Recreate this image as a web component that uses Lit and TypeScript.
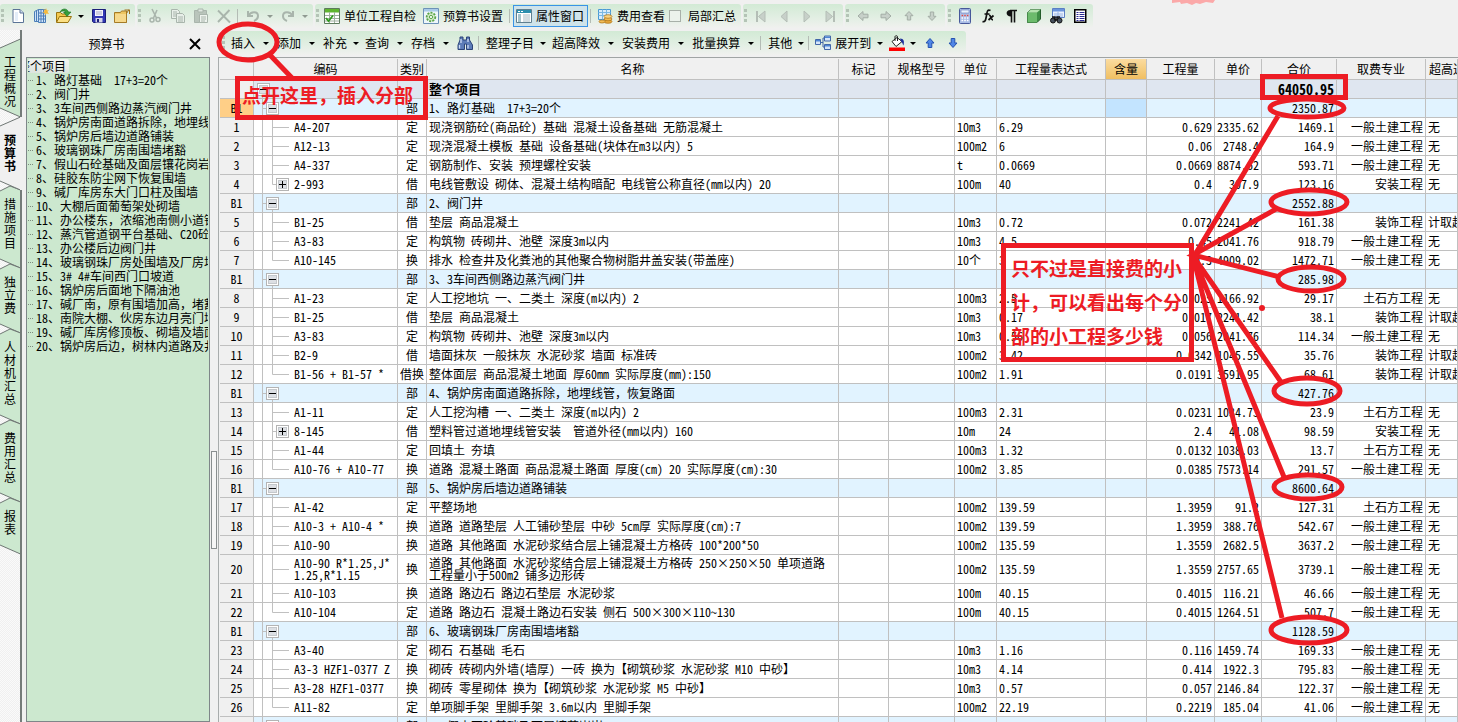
import { LitElement, html, svg, css, nothing } from "lit";
import { customElement } from "lit/decorators.js";
import { classMap } from "lit/directives/class-map.js";

type Row = {
  kind: "root" | "part" | "item";
  no?: string; code?: string; type?: string; name: string;
  unit?: string; expr?: string; qty?: string; price?: string; total?: string;
  trade?: string; extra?: string; plus?: boolean; last?: boolean; tall?: boolean; current?: boolean;
};

const T = "一般土建工程", Z = "装饰工程", A = "安装工程", S = "土石方工程", W = "无", J = "计取超高";
const part = (name: string, total: string, current = false): Row => ({ kind: "part", no: "B1", type: "部", name, total, current });
const item = (no: string, code: string, type: string, name: string, unit: string, expr: string, qty: string,
  price: string, total: string, trade: string, extra: string, opts: Partial<Row> = {}): Row =>
  ({ kind: "item", no, code, type, name, unit, expr, qty, price, total, trade, extra, ...opts });

const ROWS: Row[] = [
  { kind: "root", name: "整个项目", total: "64050.95" },
  part("1、路灯基础  17+3=20个", "2350.87", true),
  item("1", "A4-207", "定", "现浇钢筋砼(商品砼) 基础 混凝土设备基础 无筋混凝土", "10m3", "6.29", "0.629", "2335.62", "1469.1", T, W),
  item("2", "A12-13", "定", "现浇混凝土模板 基础 设备基础(块体在m3以内) 5", "100m2", "6", "0.06", "2748.4", "164.9", T, W),
  item("3", "A4-337", "定", "钢筋制作、安装 预埋螺栓安装", "t", "0.0669", "0.0669", "8874.62", "593.71", T, W),
  item("4", "2-993", "借", "电线管敷设 砌体、混凝土结构暗配 电线管公称直径(mm以内) 20", "100m", "40", "0.4", "307.9", "123.16", A, W, { plus: true, last: true }),
  part("2、阀门井", "2552.88"),
  item("5", "B1-25", "借", "垫层 商品混凝土", "10m3", "0.72", "0.072", "2241.42", "161.38", Z, J),
  item("6", "A3-83", "定", "构筑物 砖砌井、池壁 深度3m以内", "10m3", "4.5", "0.45", "2041.76", "918.79", T, W),
  item("7", "A10-145", "换", "排水 检查井及化粪池的其他聚合物树脂井盖安装(带盖座)", "10个", "3", "0.3", "4909.02", "1472.71", T, W, { last: true }),
  part("3、3车间西侧路边蒸汽阀门井", "285.98"),
  item("8", "A1-23", "定", "人工挖地坑 一、二类土 深度(m以内) 2", "100m3", "2.5", "0.025", "1166.92", "29.17", S, W),
  item("9", "B1-25", "借", "垫层 商品混凝土", "10m3", "0.17", "0.017", "2241.42", "38.1", Z, J),
  item("10", "A3-83", "定", "构筑物 砖砌井、池壁 深度3m以内", "10m3", "0.56", "0.056", "2041.76", "114.34", T, W),
  item("11", "B2-9", "借", "墙面抹灰 一般抹灰 水泥砂浆 墙面 标准砖", "100m2", "3.42", "0.0342", "1045.55", "35.76", Z, J),
  item("12", "B1-56 + B1-57 *", "借换", "整体面层 商品混凝土地面 厚60mm 实际厚度(mm):150", "100m2", "1.91", "0.0191", "3591.95", "68.61", Z, J, { last: true }),
  part("4、锅炉房南面道路拆除，地埋线管，恢复路面", "427.76"),
  item("13", "A1-11", "定", "人工挖沟槽 一、二类土 深度(m以内) 2", "100m3", "2.31", "0.0231", "1034.73", "23.9", S, W),
  item("14", "8-145", "借", "塑料管过道地埋线管安装  管道外径(mm以内) 160", "10m", "24", "2.4", "41.08", "98.59", A, W, { plus: true }),
  item("15", "A1-44", "定", "回填土 夯填", "100m3", "1.32", "0.0132", "1038.03", "13.7", S, W),
  item("16", "A10-76 + A10-77", "换", "道路 混凝土路面 商品混凝土路面 厚度(cm) 20 实际厚度(cm):30", "100m2", "3.85", "0.0385", "7573.14", "291.57", T, W, { last: true }),
  part("5、锅炉房后墙边道路铺装", "8600.64"),
  item("17", "A1-42", "定", "平整场地", "100m2", "139.59", "1.3959", "91.2", "127.31", S, W),
  item("18", "A10-3 + A10-4 *", "换", "道路 道路垫层 人工铺砂垫层 中砂 5cm厚 实际厚度(cm):7", "100m2", "139.59", "1.3959", "388.76", "542.67", T, W),
  item("19", "A10-90", "换", "道路 其他路面 水泥砂浆结合层上铺混凝土方格砖 100*200*50", "100m2", "135.59", "1.3559", "2682.5", "3637.2", T, W),
  item("20", "A10-90 R*1.25,J*\n1.25,R*1.15", "换", "道路 其他路面 水泥砂浆结合层上铺混凝土方格砖 250×250×50 单项道路\n工程量小于500m2 铺多边形砖", "100m2", "135.59", "1.3559", "2757.65", "3739.1", T, W, { tall: true }),
  item("21", "A10-103", "换", "道路 路边石 路边石垫层 水泥砂浆", "100m", "40.15", "0.4015", "116.21", "46.66", T, W),
  item("22", "A10-104", "定", "道路 路边石 混凝土路边石安装 侧石 500×300×110~130", "100m", "40.15", "0.4015", "1264.51", "507.7", T, W, { last: true }),
  part("6、玻璃钢珠厂房南围墙堵豁", "1128.59"),
  item("23", "A3-40", "定", "砌石 石基础 毛石", "10m3", "1.16", "0.116", "1459.74", "169.33", T, W),
  item("24", "A3-3 HZF1-0377 Z", "换", "砌砖 砖砌内外墙(墙厚) 一砖 换为【砌筑砂浆 水泥砂浆 M10 中砂】", "10m3", "4.14", "0.414", "1922.3", "795.83", T, W),
  item("25", "A3-28 HZF1-0377", "换", "砌砖 零星砌体 换为【砌筑砂浆 水泥砂浆 M5 中砂】", "10m3", "0.57", "0.057", "2146.84", "122.37", T, W),
  item("26", "A11-82", "定", "单项脚手架 里脚手架 3.6m以内 里脚手架", "100m2", "22.19", "0.2219", "185.04", "41.06", T, W, { last: true }),
  part("7、假山石砼基础及面层镶花岗岩", ""),
];

const HEADS = ["", "编码", "类别", "名称", "标记", "规格型号", "单位", "工程量表达式", "含量", "工程量", "单价", "合价", "取费专业", "超高过高"];

const TREE = [
  "1、路灯基础  17+3=20个", "2、阀门井", "3、3车间西侧路边蒸汽阀门井", "4、锅炉房南面道路拆除，地埋线管",
  "5、锅炉房后墙边道路铺装", "6、玻璃钢珠厂房南围墙堵豁", "7、假山石砼基础及面层镶花岗岩", "8、硅胶东防尘网下恢复围墙",
  "9、碱厂库房东大门口柱及围墙", "10、大棚后面葡萄架处砌墙", "11、办公楼东，浓缩池南侧小道铺装",
  "12、蒸汽管道钢平台基础、C20砼", "13、办公楼后边阀门井", "14、玻璃钢珠厂房处围墙及厂房地面",
  "15、3# 4#车间西门口坡道", "16、锅炉房后面地下隔油池", "17、碱厂南，原有围墙加高，堵豁",
  "18、南院大棚、伙房东边月亮门墙", "19、碱厂库房修顶板、砌墙及墙面", "20、锅炉房后边，树林内道路及井",
];

const TABS = [
  { text: "工程概况", h: 78 }, { text: "预算书", h: 73, on: true }, { text: "措施项目", h: 78 },
  { text: "独立费", h: 65 }, { text: "人材机汇总", h: 91 }, { text: "费用汇总", h: 78 }, { text: "报表", h: 52 },
];

// Half-width forms are on for Latin text; the Chinese comma keeps its full width.
const wide = (s: string) => s.split(/(，)/).map((p) => (p === "，" ? html`<span class="full">，</span>` : p));

const G = "#a9b5ac";
const ICONS: Record<string, unknown> = {
  doc: svg`<path d="M3 1.500h7l3.500 3.500v9.500H3z" fill="#fff" stroke="#5a7396"/><path d="M10 1.500v3.500h3.500" fill="#cfdcee" stroke="#5a7396"/><path d="M5 4h3v9H5z" fill="#e4edf8"/>`,
  building: svg`<path d="M1.500 3.500l4-2v12h-4zM5.500 1.500h7v13h-7z" fill="#cfe3f8" stroke="#4c7fb8"/><path d="M8 2v12M10.500 2v12M3.500 3v11M5.500 5h7M5.500 8h7M5.500 11h7" stroke="#4c7fb8"/><path d="M13 0l1 2.500 2-.5-1.500 1.800L16 6l-2.500-.5L12 7.500 11.700 5 9.500 4.500l2-1.200L10.500 1l2 1z" fill="#f5b93a"/>`,
  open: svg`<path d="M.5 14V4.500h4l1.500 1.500h5v3" fill="#f3c94f" stroke="#9a7410"/><path d="M.5 14.500l3-6h12l-3.500 6z" fill="#fbe084" stroke="#9a7410"/><path d="M4 4C6 0 11 0 12.500 4h2.500l-4 4.500L7.500 4h2.300C9 2.500 6.500 2.500 4 4z" fill="#35a03c" stroke="#1d6f25" stroke-width=".6"/>`,
  save: svg`<path d="M1.500 1.500h13v13h-12l-1-1z" fill="#3338b4" stroke="#1b1e78"/><path d="M4 2h8v6H4z" fill="#f4f4fb"/><path d="M5 4h6M5 6h6" stroke="#a9a9c8"/><path d="M4.500 10h7v4.500h-7z" fill="#d6d6ea"/><path d="M6 11h2v3H6z" fill="#1b1e78"/>`,
  folder: svg`<path d="M.5 4.500h6l1-1.500h5v11.500H.5z" fill="#edc662" stroke="#a57b26"/><path d="M1 6h11v8H1z" fill="#f6d98b"/><path d="M12.500 5.500l2.500-4M10.500 2h5v4" fill="none" stroke="#a0721c"/><path d="M12.500 5v9.500" stroke="#a57b26"/>`,
  cut: svg`<path d="M5 1l4.500 9M10 2L6.500 10" stroke="${G}" stroke-width="1.600"/><circle cx="5" cy="12" r="2" fill="none" stroke="${G}" stroke-width="1.500"/><circle cx="11" cy="11.500" r="2" fill="none" stroke="${G}" stroke-width="1.500"/>`,
  copy: svg`<path d="M1.500 1.500h6l2 2v7h-8z" fill="#e8efe9" stroke="${G}"/><path d="M6.500 5.500h6l2 2v7h-8z" fill="#e8efe9" stroke="${G}"/><path d="M8 9h5M8 11h5M8 13h5M3 4h4M3 6h3M3 8h3" stroke="${G}"/>`,
  paste: svg`<path d="M1.500 2.500h12v12h-12z" fill="#b9c4bb" stroke="${G}"/><path d="M5 1h5v3H5z" fill="#dfe7e0" stroke="${G}"/><path d="M6.500 6.500h8v8h-8z" fill="#eef3ee" stroke="${G}"/><path d="M8 9h5M8 11h5M8 13h4" stroke="${G}"/>`,
  del: svg`<path d="M2 2.500l12 12M13.500 2L2 14" stroke="${G}" stroke-width="1.900"/>`,
  undo: svg`<path d="M3 3v5h5M3.500 7.500C6 3 13 3 13 8c0 2-1.500 4-4 5" fill="none" stroke="${G}" stroke-width="2"/>`,
  redo: svg`<path d="M13 3v5H8M12.500 7.500C10 3 3 3 3 8c0 2 1.500 4 4 5" fill="none" stroke="${G}" stroke-width="2"/>`,
  check: svg`<path d="M.5.500h15v15H.5z" fill="#fff" stroke="#5d7a5d"/><path d="M1 1h14v3.500H1z" fill="#5fb530"/><path d="M1 7.500h14M1 10.500h14M1 13h14M5.500 4v11M10.500 4v11" stroke="#9fb09f"/><path d="M2 10l2.500 3L9 7.500" fill="none" stroke="#2f9a1d" stroke-width="1.800"/>`,
  gear: svg`<path d="M.5.500h15v15H.5z" fill="#eef6fb" stroke="#6d92b8"/><path d="M1 1h14v2.500H1z" fill="#a9cbe8"/><circle cx="8" cy="9" r="4.300" fill="#cfe8c4" stroke="#5aa448" stroke-width="1.800" stroke-dasharray="2 1.200"/><circle cx="8" cy="9" r="1.600" fill="#fff" stroke="#5aa448"/>`,
  panel: svg`<path d="M.5 1.500h15v13H.5z" fill="#fff" stroke="#5f7f90"/><path d="M1 2h14v3H1z" fill="#2c8fae"/><path d="M2 3.500h2M5 3.500h2" stroke="#fff"/><path d="M2 7h3M2 9h3M2 11h3M2 13h3" stroke="#4d8a9a"/><path d="M7 7h7M7 9h7M7 11h7M7 13h7" stroke="#a8bcc4"/>`,
  fee: svg`<path d="M1.500 1.500h12v10h-12z" fill="#d8ecfa" stroke="#4a9ad4"/><path d="M1.500 4.500h12M1.500 7.500h12M5.500 1.500v10M9.500 1.500v10" stroke="#7ab8e4"/><ellipse cx="11" cy="13.500" rx="4" ry="1.800" fill="#e9a93c" stroke="#a86e14" stroke-width=".7"/><ellipse cx="11" cy="11" rx="4" ry="1.800" fill="#f2bd57" stroke="#a86e14" stroke-width=".7"/><ellipse cx="11" cy="8.500" rx="4" ry="1.800" fill="#f8d483" stroke="#a86e14" stroke-width=".7"/><ellipse cx="5" cy="13.500" rx="3" ry="1.500" fill="#f2bd57" stroke="#a86e14" stroke-width=".7"/>`,
  first: svg`<path d="M4 3v11" stroke="#b4beb6" stroke-width="2"/><path d="M12 3v11L5.500 8.500z" fill="#c7d0c9" stroke="#b4beb6"/>`,
  prev: svg`<path d="M11 3v11L5 8.500z" fill="#c7d0c9" stroke="#b4beb6"/>`,
  next: svg`<path d="M5 3v11l6-5.500z" fill="#c7d0c9" stroke="#b4beb6"/>`,
  last: svg`<path d="M12 3v11" stroke="#b4beb6" stroke-width="2"/><path d="M4 3v11l6.500-5.500z" fill="#c7d0c9" stroke="#b4beb6"/>`,
  aleft: svg`<path d="M3 8l5-4.500v2.700h5v3.600H8v2.700z" fill="#c7d0c9" stroke="#a3ada5"/>`,
  aright: svg`<path d="M13 8L8 3.500v2.700H3v3.600h5v2.700z" fill="#c7d0c9" stroke="#a3ada5"/>`,
  aup: svg`<path d="M8 3.500l4 4.200H9.700V12H6.300V7.700H4z" fill="#c7d0c9" stroke="#a3ada5"/>`,
  adown: svg`<path d="M8 12.500l4-4.200H9.700V4H6.300v4.300H4z" fill="#c7d0c9" stroke="#a3ada5"/>`,
  calc: svg`<rect x="2.500" y=".5" width="11" height="15" rx="1" fill="#a9bde6" stroke="#47589a"/><path d="M4 2h8v3H4z" fill="#e8f2fc" stroke="#6a7cba" stroke-width=".6"/><path d="M4.500 7.500h7M4.500 10h7M4.500 12.500h7" stroke="#fff" stroke-width="1.600" stroke-dasharray="1.600 1.100"/><path d="M4.500 7.500h7" stroke="#d24848" stroke-width="1.600" stroke-dasharray="1.600 1.100"/>`,
  fx: svg`<path d="M10.500 2.500C7 .5 7 5 6.200 9 5.700 12 5 14.500 2.500 13.500M4.500 6h5M9 7.500c2-1 1.500 4.500 4 4.500M13.500 7.500L8.500 12" fill="none" stroke="#111" stroke-width="1.700"/>`,
  para: svg`<path d="M7 2.500h7M8.500 2.500v12M11.500 2.500v12" stroke="#111" stroke-width="1.600"/><path d="M8.500 2C2 1 2 9 8.500 8.500z" fill="#111"/>`,
  cube: svg`<path d="M1.500 4.500l3.500-3h9.500v9.500l-3.500 3.500h-9.500z" fill="#3f8f46" stroke="#235c2a"/><path d="M1.500 4.500h9.500v10h-9.500z" fill="#6cbb6c"/><path d="M1.500 4.500l3.500-3h9.500l-3.500 3z" fill="#b5e3b0"/>`,
  find: svg`<path d="M3.500.500h12v9h-12z" fill="#eaf2fd" stroke="#5a7fc4"/><path d="M4 1h11v2.500H4z" fill="#6a95dc"/><path d="M5 6h9M5 8h9M9 3.500v6" stroke="#9ab6e4"/><circle cx="4" cy="12.500" r="2.500" fill="#45505c" stroke="#111"/><circle cx="10.500" cy="12.500" r="2.500" fill="#45505c" stroke="#111"/><path d="M3 9h3v3h2V9h3" fill="none" stroke="#111" stroke-width="1.500"/>`,
  list: svg`<path d="M2.750 1.750h11v12.500h-11z" fill="#fff" stroke="#000" stroke-width="1.500"/><path d="M4.500 4.500h2M4.500 6.500h2M4.500 8.500h2M4.500 10.500h2M4.500 12.500h2M7.500 4.500h5M7.500 6.500h5M7.500 8.500h5M7.500 10.500h5M7.500 12.500h5" stroke="#2a2a90"/>`,
  bino: svg`<path d="M3 2h3v3h3.500V2h3v3l3 5v4.500H9.500V9h-2v5.500H1V10l2-5z" fill="#5d7cb8" stroke="#2d4478"/><path d="M2.500 10v3.500M4 4v4M11 10v3.500M11 4v3" stroke="#cfdcf4" stroke-width="1.300"/>`,
  nodes: svg`<path d="M5 7.500h3M8 3v9M8 3h2M8 12h2" fill="none" stroke="#4267a8"/><path d="M.5 4.500h5v5h-5zM9.500 1h6v5h-6zM9.500 9.500h6v5h-6z" fill="#d6e6fa" stroke="#4267a8"/><path d="M1 5h4v1.500H1zM10 1.500h5V3h-5zM10 10h5v1.500h-5z" fill="#4f86d4"/>`,
  paint: svg`<path d="M3 6.500l5-4 5 4-6 5z" fill="#fff" stroke="#222"/><path d="M6 6V1.500c0-1 2.500-1 2.500 0V6" fill="none" stroke="#222"/><path d="M11 3.500c4 0 4.500 3 3.500 7-1-1.500-1-3-2.500-4z" fill="#1c2f9c"/><path d="M0 12.500h16v3.500H0z" fill="#f00"/>`,
  up: svg`<path d="M8 3.500l4 4.500H9.800v4.500H6.200V8H4z" fill="#4f86e6" stroke="#2452b0"/>`,
  down: svg`<path d="M8 12.500l4-4.500H9.800V3.500H6.200V8H4z" fill="#4f86e6" stroke="#2452b0"/>`,
};
const icon = (n: string) => html`<svg class="ico" width="16" height="16" viewBox="0 0 16 16" fill="none" aria-hidden="true">${ICONS[n]}</svg>`;

@customElement("tool-bars")
class ToolBars extends LitElement {
  static styles = css`
    :host { display: contents; }
    .bar { display: flex; gap: 2px; height: 24px; font: 12px/16px "Noto Sans CJK SC", sans-serif; color: #000; }
    .group { display: flex; align-items: center; padding-right: 2px; border-radius: 3px;
      background: linear-gradient(#d2ead5, #e3efe4 60%, #f0f1ef); }
    .grip { width: 3px; height: 14px; margin: 0 2px 0 1px;
      background: repeating-linear-gradient(#b4c4b6 0 3px, transparent 3px 5px); }
    button { box-sizing: border-box; height: 22px; padding: 0; border: 1px solid transparent; background: none; font: inherit; color: inherit;
      display: flex; align-items: center; justify-content: center; white-space: nowrap; }
    .i { width: 23px; }
    .t { padding: 0 3px; }
    .it { padding: 0 3px 0 2px; gap: 4px; }
    .on { border-color: #3a93e6; background: #cfe3ea; }
    .c { width: 14px; }
    .c.narrow { width: 12px; }
    .c.menu { width: 10px; }
    .ico { flex: none; display: block; }
    .sep { width: 1px; height: 14px; margin: 0 3px 0 2px; background: #b4bcb5; }
    label { display: flex; align-items: center; gap: 7px; padding-right: 3px; white-space: nowrap; }
    input { appearance: none; box-sizing: border-box; width: 12px; height: 12px; margin: 0; border: 1px solid #a8b0a9; background: #ecf2ec; }
  `;
  i(n: string, label: string) { return html`<button class="i" aria-label=${label}>${icon(n)}</button>`; }
  t(text: string) { return html`<button class="t">${text}</button>`; }
  it(n: string, text: string, on = false) { return html`<button class=${classMap({ it: true, on })}>${icon(n)}${text}</button>`; }
  c(kind = "", grey = false) {
    return html`<button class="c ${kind}" aria-label="更多"><svg width="6" height="3" viewBox="0 0 6 3" aria-hidden="true"><path d="M0 0h6L3 3z" fill=${grey ? "#8f9a91" : "#000"} /></svg></button>`;
  }
  render() {
    const grip = html`<span class="grip"></span>`, sep = html`<span class="sep"></span>`;
    if (this.hasAttribute("edit")) return html`<div class="bar"><div class="group">${grip}
      ${this.t("插入")}${this.c()}${this.t("添加")}${this.c()}${this.t("补充")}${this.c("menu")}${this.t("查询")}${this.c()}${this.t("存档")}${this.c()}
      ${this.i("bino", "查找")}${sep}${this.t("整理子目")}${this.c("menu")}${this.t("超高降效")}${this.c()}${this.t("安装费用")}${this.c()}
      ${this.t("批量换算")}${this.c()}${sep}${this.t("其他")}${this.c("menu")}${sep}${this.it("nodes", "展开到")}${this.c("menu")}
      ${this.i("paint", "填充颜色")}${this.c("menu")}${this.i("up", "上移")}${this.i("down", "下移")}</div></div>`;
    return html`<div class="bar">
      <div class="group">${grip}${this.i("doc", "新建")}${this.i("building", "新建工程")}${this.i("open", "打开")}${this.c("narrow")}${this.i("save", "保存")}${this.i("folder", "目录")}</div>
      <div class="group">${grip}${this.i("cut", "剪切")}${this.i("copy", "复制")}${this.i("paste", "粘贴")}${this.i("del", "删除")}${sep}${this.i("undo", "撤销")}${this.c("narrow", true)}${this.i("redo", "重做")}${this.c("narrow", true)}</div>
      <div class="group">${grip}${this.it("check", "单位工程自检")}${this.it("gear", "预算书设置")}${sep}${this.it("panel", "属性窗口", true)}${sep}${this.it("fee", "费用查看")}<label><input type="checkbox" />局部汇总</label></div>
      <div class="group">${grip}${this.i("first", "首行")}${this.i("prev", "上一行")}${this.i("next", "下一行")}${this.i("last", "末行")}</div>
      <div class="group">${grip}${this.i("aleft", "左移")}${this.i("aright", "右移")}${this.i("aup", "升级")}${this.i("adown", "降级")}</div>
      <div class="group">${grip}${this.i("calc", "计算器")}${this.i("fx", "函数")}${this.i("para", "段落")}${this.i("cube", "模型")}${this.i("find", "查找表")}${this.i("list", "列表")}</div>
    </div>`;
  }
}

@customElement("side-tabs")
class SideTabs extends LitElement {
  static styles = css`
    :host { display: block; width: 22px; overflow: hidden; }
    nav { position: relative; box-sizing: border-box; height: 100%; padding-top: 9px;
      background: repeating-conic-gradient(#f0f0f0 0 25%, #fafafa 0 50%) 0 0 / 2px 2px; }
    .art { position: absolute; left: 0; top: 0; }
    button { position: relative; display: flex; justify-content: center; align-items: flex-start; box-sizing: border-box; width: 20px; padding: 7px 0 0; border: 0;
      background: none; color: #000; font: 12px/13px "Noto Sans CJK SC", sans-serif; }
    .low { padding-top: 16px; }
    .on { font-weight: 700; }
    .word { width: 12px; word-break: break-all; }
  `;
  render() {
    let y = 9;
    const spans = TABS.map((t) => { const s = { a: y, b: y + t.h, on: !!t.on }; y = s.b; return s; });
    const shape = (s: { a: number; b: number; on: boolean }) => {
      const top = s.on || s.a === 9 ? `M20.500 ${s.a}L0 ${s.a + 9}` : `M20.500 ${s.a}L10 ${s.a - 4}L0 ${s.a + 1}`;
      return svg`<path d="${top}V${s.b - 9}L20.500 ${s.b}z" fill=${s.on ? "#f0f0f0" : "#cce8cf"} />
        <path d="${top}M0 ${s.b - 9}L20.500 ${s.b}" fill="none" stroke="#6e7673" />`;
    };
    const on = spans.find((s) => s.on)!;
    return html`<nav aria-label="工程页签">
      <svg class="art" width="22" height="900" aria-hidden="true">
        ${spans.filter((s) => !s.on).map(shape)}${shape(on)}
        <path d="M21 0V${on.a}M21 ${on.b}V900" stroke="#747b79" stroke-width="2" /><path d="M21 ${on.a}V${on.b}" stroke="#f0f0f0" stroke-width="2" />
      </svg>
      ${TABS.map((t, i) => html`<button class=${classMap({ low: i < 2, on: !!t.on })} style="height:${t.h}px"><span class="word">${t.text}</span></button>`)}
    </nav>`;
  }
}

@customElement("budget-grid")
class BudgetGrid extends LitElement {
  static styles = css`
    :host { display: block; min-width: 0; min-height: 0; overflow: hidden; border-left: 1px solid #a8acac; border-top: 1px solid #a0a4a4; padding: 1px 0 0 1px; }
    table { width: 100%; table-layout: fixed; border-collapse: separate; border-spacing: 0; background: #fff; color: #000;
      font: 12px/12px "Noto Sans CJK SC", sans-serif; font-feature-settings: "hwid"; }
    .full { font-feature-settings: normal; }
    th, td { box-sizing: border-box; height: 19px; padding: 0 2px; border: 0 solid #c0c0c0; border-width: 0 1px 1px 0; white-space: pre; overflow: hidden;
      font-weight: 400; text-align: left; vertical-align: middle; }
    thead th { height: 21px; background: #f0f0f0; text-align: center; padding: 0; }
    thead th.hot { background: linear-gradient(#fbdca0, #f0bf62); }
    thead th:last-child { text-align: left; padding-left: 3px; }
    tbody th { background: #f0f0f0; text-align: center; }
    .tall td, .tall th { height: 29px; }
    .code { padding: 0; }
    .tree { display: flex; align-items: center; gap: 4px; }
    .tree svg { flex: none; display: block; }
    .mid { text-align: center; padding: 0; }
    .num { text-align: right; }
    .root td { background: #dfe6f0; font-weight: 700; font-size: 13px; }
    .root .num { font-size: 14px; }
    .part td { background: #e1f3ff; }
    .current th { background: #ffcf87; }
    .current td.hot { background: #c3e4ff; }
    .w34 { width: 34px; } .w144 { width: 144px; } .w29 { width: 29px; } .w50 { width: 50px; } .w66 { width: 66px; } .w42 { width: 42px; } .w109 { width: 109px; }
    .w41 { width: 41px; } .w68 { width: 68px; } .w47 { width: 47px; } .w75 { width: 75px; } .w89 { width: 89px; } .w32 { width: 32px; }
  `;
  tree(r: Row) {
    const h = r.tall ? 28 : 18, m = h / 2 + 0.5;
    const box = (x: number, plus: boolean) => svg`<rect x=${x + 0.5} y=${m - 6} width="12" height="12" fill="#fff" stroke="#b4b4b4" />
      <rect x=${x + 2.5} y=${m - 4} width="8" height="8" fill="#dcdfe4" stroke="#c4c8cc" />
      <path d="M${x + 3} ${m}h7${plus ? `M${x + 6.5} ${m - 3.5}v7` : ""}" stroke="#000" />`;
    const body = r.kind === "root" ? svg`<path d="M8.500 ${m}V${h}" stroke="#c0c0c0" />${box(3, false)}`
      : r.kind === "part" ? svg`<path d="M8.500 0V${h}M8.500 ${m}h4M18.500 ${m}V${h}" stroke="#c0c0c0" />${box(12, false)}`
      : svg`<path d="M8.500 0V${h}M18.500 0V${r.last ? m : h}M18.500 ${m}H${r.plus ? 24 : 35}" stroke="#c0c0c0" />${r.plus ? box(22, true) : nothing}`;
    return html`<div class="tree"><svg width="36" height=${h} fill="none" aria-hidden="true">${body}</svg><span>${r.code ?? ""}</span></div>`;
  }
  render() {
    const widths = ["w34", "w144", "w29", "", "w50", "w66", "w42", "w109", "w41", "w68", "w47", "w75", "w89", "w32"];
    return html`<table>
      <colgroup>${widths.map((w) => html`<col class=${w} />`)}</colgroup>
      <thead><tr>${HEADS.map((h) => html`<th scope="col" class=${h === "含量" ? "hot" : ""}>${h}</th>`)}</tr></thead>
      <tbody>${ROWS.map((r) => html`<tr class=${classMap({ [r.kind]: true, tall: !!r.tall, current: !!r.current })}>
        <th scope="row">${r.no ?? ""}</th><td class="code">${this.tree(r)}</td><td class="mid">${r.type ?? ""}</td><td>${wide(r.name)}</td><td></td><td></td>
        <td>${r.unit ?? ""}</td><td>${r.expr ?? ""}</td><td class="hot"></td><td class="num">${r.qty ?? ""}</td><td class="num">${r.price ?? ""}</td>
        <td class="num">${r.total ?? ""}</td><td class="num">${r.trade ?? ""}</td><td>${r.extra ?? ""}</td></tr>`)}</tbody>
    </table>`;
  }
}

@customElement("red-notes")
class RedNotes extends LitElement {
  static styles = css`
    :host { position: absolute; left: 0; top: 0; width: 1458px; height: 722px; pointer-events: none; }
    svg { position: absolute; left: 0; top: 0; }
    .note { position: absolute; box-sizing: border-box; border: 5px solid #ed1c24; color: #ed1c24; font: 700 19px/34px "Noto Sans CJK SC", sans-serif; white-space: pre; }
    .one { left: 235px; top: 76px; width: 193px; height: 44px; padding-left: 2px; line-height: 28px; }
    .two { left: 1001px; top: 243px; width: 193px; height: 119px; padding: 3px 0 0 5px; }
  `;
  render() {
    const rings = [[1307, 108, 37, 9], [1309, 202, 38, 12], [1311, 279, 33, 12], [1307, 391, 33, 13], [1308, 487, 34, 12], [1309, 630, 38, 13], [248, 42, 29, 18]];
    return html`<svg width="1458" height="722" aria-hidden="true">
        <path d="M1172 0h43l-2 3-7-1-6 2-4-1-4 2-5-2-6 1-1-2-8 1z" fill="#fba9a9" />
        <g fill="none" stroke="#ed1c24" stroke-width="5">
          <path d="M269 54L293 79M1278 116L1193 258M1278 208L1193 255L1280 277M1193 256L1281 382M1193 256L1284 477M1193 256L1282 618" />
          <rect x="1262.500" y="76.500" width="83" height="21" />
          ${rings.map(([x, y, a, b]) => svg`<ellipse cx=${x} cy=${y} rx=${a} ry=${b} />`)}
        </g>
        <circle cx="1262" cy="308" r="3" fill="#ed1c24" />
      </svg>
      <div class="note one">点开这里，插入分部</div>
      <div class="note two">只不过是直接费的小
计，可以看出每个分
部的小工程多少钱</div>`;
  }
}

@customElement("app-root")
class AppRoot extends LitElement {
  static styles = css`
    :host { display: block; position: relative; height: 100vh; overflow: hidden; background: #f0f0f0; }
    .page { display: grid; grid-template-rows: 26px minmax(0, 1fr); box-sizing: border-box; height: 100%; padding-top: 4px; }
    .main { display: grid; grid-template-columns: 22px 188px 8px minmax(0, 1fr); min-height: 0; }
    .side { display: grid; grid-template-rows: 27px minmax(0, 1fr); padding-left: 4px; min-height: 0; }
    .title { display: flex; align-items: center; font: 12px/16px "Noto Sans CJK SC", sans-serif; color: #000; }
    .title h1 { flex: 1; margin: 0; padding-left: 4px; font: inherit; text-align: center; }
    .title button { width: 24px; height: 24px; margin-right: 3px; padding: 0; border: 0; background: none; display: grid; place-items: center; }
    .tree { box-sizing: border-box; margin: 0; padding: 1px 1px 0; list-style: none; overflow: hidden; border: 1px solid #7e8789; background: #cce8cf;
      font: 12px/14px "Noto Sans CJK SC", sans-serif; font-feature-settings: "hwid"; color: #000; }
    .tree li { display: flex; align-items: center; gap: 3px; height: 14px; white-space: pre; overflow: hidden; }
    .tree li::before { content: ""; flex: none; width: 5px; height: 1px; background: repeating-linear-gradient(90deg, #7c8a7e 0 1px, transparent 1px 2px); }
    .tree .all { width: 41px; justify-content: flex-end; gap: 0; padding-right: 3px; box-sizing: border-box; border-radius: 2px; background: linear-gradient(#f2f4f2, #dde4de); }
    .tree .all::before { content: none; }
    .full { font-feature-settings: normal; }
    .split { display: grid; align-content: start; padding: 421px 1px 0; }
    .knob { height: 98px; border: 1px solid #8a8f90; background: #f6f6f6; padding: 0; }
    .work { display: grid; grid-template-rows: 27px minmax(0, 1fr); min-height: 0; min-width: 0; }
    .top { padding: 1px 0 0 3px; }
  `;
  render() {
    return html`<div class="page">
        <tool-bars></tool-bars>
        <div class="main">
          <side-tabs></side-tabs>
          <section class="side">
            <div class="title"><h1>预算书</h1><button aria-label="关闭"><svg width="12" height="12" aria-hidden="true"><path d="M1 1l10 10M11 1L1 11" stroke="#000" stroke-width="2" /></svg></button></div>
            <ul class="tree"><li class="all">整个项目</li>${TREE.map((t) => html`<li><span>${wide(t)}</span></li>`)}</ul>
          </section>
          <div class="split"><button class="knob" aria-label="折叠面板"></button></div>
          <section class="work"><div class="top"><tool-bars edit></tool-bars></div><budget-grid></budget-grid></section>
        </div>
      </div>
      <red-notes></red-notes>`;
  }
}
